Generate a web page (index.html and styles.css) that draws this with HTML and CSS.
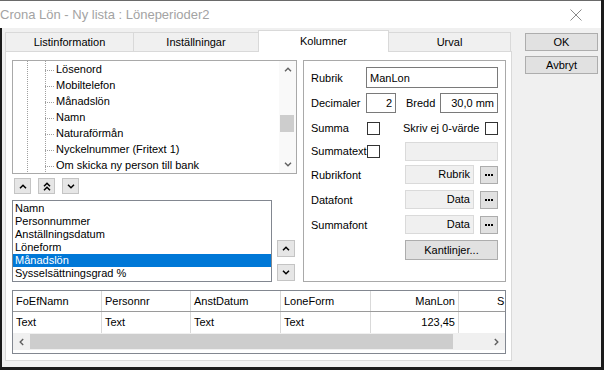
FILE: index.html
```html
<!DOCTYPE html>
<html lang="sv">

<head>
    <meta charset="UTF-8">
    <title>Crona Lön - Ny lista</title>
    <link rel="stylesheet" href="styles.css">
</head>

<body>
    <div class="window">
        <div class="titlebar">
            <span class="title">Crona Lön - Ny lista : Löneperioder2</span>
            <svg class="close" width="12" height="12" viewBox="0 0 12 12"><path d="M0.5 0.5 11.5 11.5M11.5 0.5 0.5 11.5" stroke="#8a8a8a" stroke-width="1" fill="none"/></svg>
        </div>

        <div class="dialog">
            <div class="tabctl">
                <div class="tabs">
                    <div class="tab t1">Listinformation</div>
                    <div class="tab t2">Inställningar</div>
                    <div class="tab t3 active">Kolumner</div>
                    <div class="tab t4">Urval</div>
                </div>

                <div class="page">
                    <div class="top">
                        <div class="leftcol">
                            <!-- fält-träd -->
                            <div class="tree">
                                <div class="tree_items">
                                    <div class="node">Lösenord</div>
                                    <div class="node">Mobiltelefon</div>
                                    <div class="node">Månadslön</div>
                                    <div class="node">Namn</div>
                                    <div class="node">Naturaförmån</div>
                                    <div class="node">Nyckelnummer (Fritext 1)</div>
                                    <div class="node">Om skicka ny person till bank</div>
                                </div>
                                <div class="vscroll">
                                    <div class="sb_btn"><svg width="8" height="5" viewBox="0 0 8 5"><path d="M1 4.2 4 1.2 7 4.2" fill="none" stroke="#606060" stroke-width="1.4"/></svg></div>
                                    <div class="sb_track"><div class="sb_thumb"></div></div>
                                    <div class="sb_btn"><svg width="8" height="5" viewBox="0 0 8 5"><path d="M1 0.8 4 3.8 7 0.8" fill="none" stroke="#606060" stroke-width="1.4"/></svg></div>
                                </div>
                            </div>

                            <div class="movebtns">
                                <div class="mbtn"><svg width="8" height="5" viewBox="0 0 8 5"><path d="M1 4.2 4 1.2 7 4.2" fill="none" stroke="#000" stroke-width="1.5"/></svg></div>
                                <div class="mbtn"><svg width="8" height="9" viewBox="0 0 8 9"><path d="M1 4.2 4 1.2 7 4.2M1 8.2 4 5.2 7 8.2" fill="none" stroke="#000" stroke-width="1.5"/></svg></div>
                                <div class="mbtn"><svg width="8" height="5" viewBox="0 0 8 5"><path d="M1 0.8 4 3.8 7 0.8" fill="none" stroke="#000" stroke-width="1.5"/></svg></div>
                            </div>

                            <div class="chosen">
                                <div class="list">
                                    <div class="item">Namn</div>
                                    <div class="item">Personnummer</div>
                                    <div class="item">Anställningsdatum</div>
                                    <div class="item">Löneform</div>
                                    <div class="item sel">Månadslön</div>
                                    <div class="item">Sysselsättningsgrad %</div>
                                </div>
                                <div class="sidebtns">
                                    <div class="mbtn sbtn"><svg width="8" height="5" viewBox="0 0 8 5"><path d="M1 4.2 4 1.2 7 4.2" fill="none" stroke="#000" stroke-width="1.5"/></svg></div>
                                    <div class="mbtn sbtn"><svg width="8" height="5" viewBox="0 0 8 5"><path d="M1 0.8 4 3.8 7 0.8" fill="none" stroke="#000" stroke-width="1.5"/></svg></div>
                                </div>
                            </div>
                        </div>

                        <!-- kolumnegenskaper -->
                        <div class="props">
                            <div class="row r1">
                                <span class="lbl">Rubrik</span>
                                <div class="field grow_f">ManLon</div>
                            </div>
                            <div class="row r2">
                                <span class="lbl">Decimaler</span>
                                <div class="field dec">2</div>
                                <span class="lbl2">Bredd</span>
                                <div class="field bredd">30,0 mm</div>
                            </div>
                            <div class="row r3">
                                <span class="lbl">Summa</span>
                                <span class="chk"></span>
                                <span class="lbl3">Skriv ej 0-värde</span>
                                <span class="chk right"></span>
                            </div>
                            <div class="row r4">
                                <span class="lbl">Summatext</span>
                                <span class="chk"></span>
                                <div class="disabled"></div>
                            </div>
                            <div class="row rf r5">
                                <span class="lbl wide">Rubrikfont</span>
                                <div class="fontbox">Rubrik</div>
                                <div class="dots"><svg width="8" height="2" viewBox="0 0 8 2"><path d="M0 0h2v2H0zM3 0h2v2H3zM6 0h2v2H6z" fill="#000"/></svg></div>
                            </div>
                            <div class="row rf">
                                <span class="lbl wide">Datafont</span>
                                <div class="fontbox">Data</div>
                                <div class="dots"><svg width="8" height="2" viewBox="0 0 8 2"><path d="M0 0h2v2H0zM3 0h2v2H3zM6 0h2v2H6z" fill="#000"/></svg></div>
                            </div>
                            <div class="row rf">
                                <span class="lbl wide">Summafont</span>
                                <div class="fontbox">Data</div>
                                <div class="dots"><svg width="8" height="2" viewBox="0 0 8 2"><path d="M0 0h2v2H0zM3 0h2v2H3zM6 0h2v2H6z" fill="#000"/></svg></div>
                            </div>
                            <div class="row r8">
                                <div class="btn kant">Kantlinjer...</div>
                            </div>
                        </div>
                    </div>

                    <!-- förhandsvisning -->
                    <div class="grid">
                        <div class="ghead">
                            <div class="cell c1">FoEfNamn</div>
                            <div class="cell c2">Personnr</div>
                            <div class="cell c3">AnstDatum</div>
                            <div class="cell c4">LoneForm</div>
                            <div class="cell c5 num">ManLon</div>
                            <div class="cell c6">S</div>
                        </div>
                        <div class="grow">
                            <div class="cell c1">Text</div>
                            <div class="cell c2">Text</div>
                            <div class="cell c3">Text</div>
                            <div class="cell c4">Text</div>
                            <div class="cell c5 num">123,45</div>
                            <div class="cell c6"></div>
                        </div>
                        <div class="hscroll">
                            <div class="hs_btn"><svg width="5" height="8" viewBox="0 0 5 8"><path d="M4.2 1 1.2 4 4.2 7" fill="none" stroke="#606060" stroke-width="1.4"/></svg></div>
                            <div class="hs_track"><div class="hs_thumb"></div></div>
                            <div class="hs_btn"><svg width="5" height="8" viewBox="0 0 5 8"><path d="M0.8 1 3.8 4 0.8 7" fill="none" stroke="#606060" stroke-width="1.4"/></svg></div>
                        </div>
                    </div>
                </div>
            </div>

            <div class="actions">
                <div class="btn">OK</div>
                <div class="btn">Avbryt</div>
            </div>
        </div>
    </div>
</body>

</html>
```

FILE: styles.css
```css
body {margin: 0; background: #fff; font-family: "Liberation Sans", Arial, sans-serif; font-size: 11px; color: #000;}

.window {width: 604px; height: 370px; border-right: 3px solid #1b1b1b; box-sizing: border-box; display: flex; flex-direction: column;}

.titlebar {height: 28px; flex: none; border-top: 1px solid #6a6a6a; box-sizing: border-box; display: flex; align-items: center; justify-content: space-between; padding-right: 19px;}
.title {font-size: 13px; color: #a3a3a3; margin-left: 0; white-space: nowrap;}

.dialog {flex: 1; background: #f0f0f0; border-left: 2px solid #1b1b1b; border-bottom: 3px solid #1b1b1b; display: flex; padding: 2px 0 0 3px;}

/* flikar */
.tabctl {width: 507px;}
.tabs {display: flex; align-items: flex-end; height: 21px;}
.tab {height: 19px; line-height: 19px; box-sizing: border-box; text-align: center; background: #f0f0f0; border: 1px solid #d9d9d9; border-bottom: none; margin-right: -1px;}
.t1 {width: 129px;}
.t2 {width: 126px;}
.t3 {width: 131px;}
.t4 {width: 123px;}
.tab.active {height: 22px; line-height: 20px; background: #fff; margin-bottom: -1px; position: relative; z-index: 1;}

.page {height: 310px; box-sizing: border-box; border: 1px solid #d9d9d9; background: #fff; padding: 8px 0 0 6px;}

.top {display: flex; gap: 6px;}
.leftcol {width: 285px;}

/* träd */
.tree {height: 114px; box-sizing: border-box; border: 1px solid #a9a9a9; display: flex;}
.tree_items {
    flex: 1;
    overflow: hidden;
    background-image: linear-gradient(#a0a0a0 50%, transparent 50%), linear-gradient(#a0a0a0 50%, transparent 50%);
    background-size: 1px 2px;
    background-position: 14px 0, 32px 0;
    background-repeat: repeat-y;
}
.node {height: 16px; line-height: 16px; white-space: nowrap; padding-left: 32px;}
.node::before {
    content: "";
    display: inline-block;
    width: 9px; height: 1px;
    margin-right: 2px;
    vertical-align: middle;
    background-image: linear-gradient(to right, #a0a0a0 50%, transparent 50%);
    background-size: 2px 1px;
}

.vscroll {width: 17px; display: flex; flex-direction: column; background: #f9f9f9;}
.sb_btn {height: 17px; display: flex; align-items: center; justify-content: center;}
.sb_track {flex: 1;}
.sb_thumb {height: 17px; margin: 37px 2px 0 1px; background: #cdcdcd;}

/* flyttknappar */
.movebtns {display: flex; gap: 7px; margin: 4px 0 0 2px;}
.mbtn {width: 17px; height: 16px; box-sizing: border-box; border: 1px solid #c4c4c4; background: #e6e6e6; display: flex; align-items: center; justify-content: center;}

.chosen {display: flex; gap: 5px; margin-top: 6px;}
.list {width: 260px; height: 82px; box-sizing: border-box; border: 1px solid #828790; padding-top: 1px;}
.item {height: 13px; line-height: 13px; padding-left: 2px; white-space: nowrap;}
.item.sel {background: #0078d7; color: #fff;}
.sidebtns {display: flex; flex-direction: column; justify-content: flex-end; gap: 7px; padding-bottom: 1px;}
.sbtn {width: 18px; height: 17px;}

/* egenskaper */
.props {width: 203px; height: 222px; box-sizing: border-box; border: 1px solid #a9a9a9; padding: 6px 7px 0;}
.row {display: flex; align-items: center; height: 20px;}
.r1 {height: 21px;}
.r2, .r3 {margin-top: 5px;}
.r4 {margin-top: 3px;}
.rf {height: 19px; margin-top: 6px;}
.r5 {margin-top: 4px;}
.r8 {margin-top: 6px; justify-content: flex-end;}

.lbl {width: 55px; flex: none; white-space: nowrap;}
.lbl.wide {flex: 1;}
.field {height: 100%; box-sizing: border-box; border: 1px solid #7a7a7a; padding: 0 3px; display: flex; align-items: center; background: #fff;}
.grow_f {flex: 1;}
.dec {width: 30px; justify-content: flex-end;}
.lbl2 {margin-left: 10px; width: 34px;}
.bredd {width: 58px; justify-content: flex-end;}

.chk {width: 13px; height: 13px; box-sizing: border-box; border: 1px solid #333; margin-left: 1px; background: #fff;}
.chk.right {margin-left: auto;}
.lbl3 {margin-left: 23px;}
.disabled {margin-left: auto; width: 93px; height: 19px; box-sizing: border-box; border: 1px solid #dadada; background: #f0f0f0;}

.fontbox {width: 69px; height: 19px; box-sizing: border-box; border: 1px solid #dadada; background: #f0f0f0; text-align: right; line-height: 17px; padding-right: 3px;}
.dots {width: 18px; height: 18px; box-sizing: border-box; margin-left: 6px; border: 1px solid #adadad; background: #e1e1e1; display: flex; align-items: center; justify-content: center;}

.btn {height: 18px; line-height: 16px; box-sizing: border-box; border: 1px solid #adadad; background: #e1e1e1; text-align: center;}
.kant {width: 93px; height: 20px; line-height: 18px;}

/* rutnät */
.grid {margin-top: 8px; width: 494px; height: 64px; box-sizing: border-box; border: 1px solid #828790; display: flex; flex-direction: column; overflow: hidden;}
.ghead, .grow {display: flex; height: 20px; line-height: 20px;}
.ghead {border-bottom: 1px solid #9a9a9a;}
.grow {height: 21px; line-height: 21px;}
.cell {box-sizing: border-box; padding: 0 3px; border-right: 1px solid #d9d9d9; white-space: nowrap; overflow: hidden; flex: none;}
.c1 {width: 89px;}
.c2 {width: 89px;}
.c3 {width: 90px;}
.c4 {width: 90px;}
.c5 {width: 88px;}
.c6 {flex: 1; border-right: none; padding-left: 38px;}
.num {text-align: right;}

.hscroll {height: 17px; display: flex; background: #f0f0f0;}
.hs_btn {width: 17px; display: flex; align-items: center; justify-content: center;}
.hs_track {flex: 1;}
.hs_thumb {width: 423px; height: 15px; margin-top: 1px; background: #cdcdcd;}

/* knappar */
.actions {margin: 3px 0 0 13px; display: flex; flex-direction: column; gap: 5px;}
.actions .btn {width: 73px;}
```
